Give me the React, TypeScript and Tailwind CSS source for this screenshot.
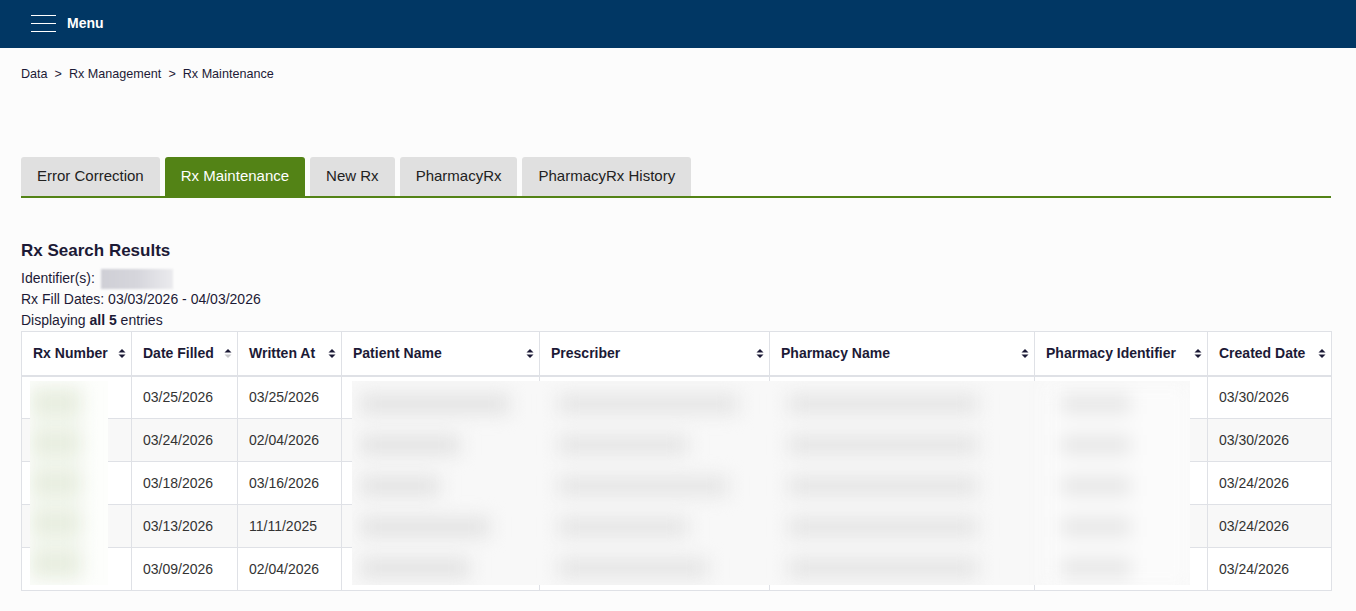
import React from 'react'

const tabs = ['Error Correction', 'Rx Maintenance', 'New Rx', 'PharmacyRx', 'PharmacyRx History']

const columns = [
  { label: 'Rx Number', width: 110, sort: 'both' },
  { label: 'Date Filled', width: 106, sort: 'asc' },
  { label: 'Written At', width: 104, sort: 'both' },
  { label: 'Patient Name', width: 198, sort: 'both' },
  { label: 'Prescriber', width: 230, sort: 'both' },
  { label: 'Pharmacy Name', width: 265, sort: 'both' },
  { label: 'Pharmacy Identifier', width: 173, sort: 'both' },
  { label: 'Created Date', width: 124, sort: 'both' },
]

const rows = [
  { filled: '03/25/2026', written: '03/25/2026', created: '03/30/2026' },
  { filled: '03/24/2026', written: '02/04/2026', created: '03/30/2026' },
  { filled: '03/18/2026', written: '03/16/2026', created: '03/24/2026' },
  { filled: '03/13/2026', written: '11/11/2025', created: '03/24/2026' },
  { filled: '03/09/2026', written: '02/04/2026', created: '03/24/2026' },
]

// widths of the hidden text bars per row: patient, prescriber, pharmacy, identifier
const hidden = [
  [150, 180, 190, 70],
  [100, 130, 190, 70],
  [80, 170, 190, 70],
  [130, 130, 190, 70],
  [110, 150, 190, 70],
]

function SortIcon({ dir }: { dir: string }) {
  return (
    <svg width="8" height="11" viewBox="0 0 8 11" className="shrink-0">
      <path d="M4 1L7.5 4.5H0.5z" fill="#1c1a36" />
      <path d="M4 10L7.5 6.5H0.5z" fill={dir === 'asc' ? '#c8c8cc' : '#1c1a36'} />
    </svg>
  )
}

export default function App() {
  return (
    <div className="min-h-screen bg-[#fcfcfc] text-[#1c1a36]" style={{ fontFamily: '"Liberation Sans", Arial, sans-serif' }}>
      {/* top bar */}
      <div className="h-12 bg-[#013764] flex items-center pl-[31px] gap-[11px]">
        <div className="flex flex-col gap-[7px] w-[25px] -mt-[2px]">
          <span className="block h-px bg-white" />
          <span className="block h-px bg-white" />
          <span className="block h-px bg-white" />
        </div>
        <span className="text-white font-bold text-[14px] -mt-[2px]">Menu</span>
      </div>

      <div className="px-[21px] pr-[25px]">
        {/* breadcrumb */}
        <div className="pt-[18px] text-[12.6px] flex gap-[7px] leading-[16px]">
          <span>Data</span>
          <span>&gt;</span>
          <span>Rx Management</span>
          <span>&gt;</span>
          <span>Rx Maintenance</span>
        </div>

        {/* tabs */}
        <div className="mt-[75px] flex gap-[5px] border-b-2 border-[#538316]">
          {tabs.map(t => (
            <div
              key={t}
              className={
                t === 'Rx Maintenance'
                  ? 'h-[39px] px-4 flex items-center rounded-t-[3px] bg-[#538316] text-white text-[15px]'
                  : 'h-[39px] px-4 flex items-center rounded-t-[3px] bg-[#e0e0e0] text-[#222] text-[15px]'
              }>
              {t}
            </div>
          ))}
        </div>

        {/* results summary */}
        <h2 className="mt-[43px] text-[17px] font-bold leading-[20px]">Rx Search Results</h2>
        <div className="mt-[7px] text-[14px] leading-[21px]">
          <div className="flex items-center gap-[6px]">
            <span>Identifier(s):</span>
            <span className="block w-[72px] h-[20px] bg-gradient-to-r from-[#cfcfd6] via-[#d6d6dc] to-[#ebebee] blur-[1px]" />
          </div>
          <div>Rx Fill Dates: 03/03/2026 - 04/03/2026</div>
          <div>Displaying <b>all 5</b> entries</div>
        </div>

        {/* results table */}
        <div className="relative">
          <table className="border-collapse table-fixed text-[14px] w-[1310px]">
            <colgroup>
              {columns.map(c => (
                <col key={c.label} style={{ width: c.width }} />
              ))}
            </colgroup>
            <thead>
              <tr className="h-[44px] bg-white">
                {columns.map(c => (
                  <th key={c.label} className="border border-[#dfe1e6] border-b-2 pl-[11px] pr-[5px] text-left font-bold">
                    <div className="flex items-center justify-between">
                      <span>{c.label}</span>
                      <SortIcon dir={c.sort} />
                    </div>
                  </th>
                ))}
              </tr>
            </thead>
            <tbody className="text-[#333]">
              {rows.map((r, i) => (
                <tr key={i} className={i % 2 === 1 ? 'h-[43px] bg-[#f8f8f8]' : 'h-[43px] bg-white'}>
                  <td className="border border-[#dfe1e6]" />
                  <td className="border border-[#dfe1e6] pl-[11px]">{r.filled}</td>
                  <td className="border border-[#dfe1e6] pl-[11px]">{r.written}</td>
                  <td className="border border-[#dfe1e6]" />
                  <td className="border border-[#dfe1e6]" />
                  <td className="border border-[#dfe1e6]" />
                  <td className="border border-[#dfe1e6]" />
                  <td className="border border-[#dfe1e6] pl-[11px]">{r.created}</td>
                </tr>
              ))}
            </tbody>
          </table>

          {/* redacted rx numbers */}
          <div className="absolute left-[9px] top-[50px] w-[78px] h-[204px] overflow-hidden bg-[#fdfefc]">
            <div className="flex flex-col gap-[8px] pt-[6px] blur-[9px]">
              {rows.map((_, i) => (
                <span key={i} className="block h-[32px] w-[52px] bg-[#e8eee0]" />
              ))}
            </div>
          </div>

          {/* redacted names */}
          <div className="absolute left-[331px] top-[50px] w-[838px] h-[204px] overflow-hidden bg-[#f8f8f8]">
            <div className="flex flex-col pt-[2px] blur-[9px]">
              {hidden.map((h, i) => (
                <div key={i} className="h-[41px] flex items-center">
                  <div className="w-[198px] pl-[8px]">
                    <span className="block h-[20px] bg-[#e3e3e3]" style={{ width: h[0] }} />
                  </div>
                  <div className="w-[230px] pl-[8px]">
                    <span className="block h-[20px] bg-[#e5e5e5]" style={{ width: h[1] }} />
                  </div>
                  <div className="w-[265px] pl-[8px]">
                    <span className="block h-[20px] bg-[#e5e5e5]" style={{ width: h[2] }} />
                  </div>
                  <div className="w-[145px] pl-[16px] bg-[#fbfbfb] h-[41px] flex items-center">
                    <span className="block h-[20px] bg-[#e7e7e7]" style={{ width: h[3] }} />
                  </div>
                </div>
              ))}
            </div>
          </div>
        </div>
      </div>
    </div>
  )
}
